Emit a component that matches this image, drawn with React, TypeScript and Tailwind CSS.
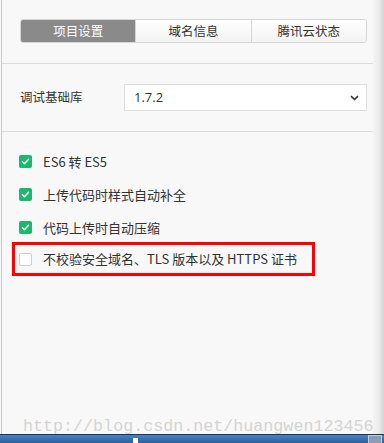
import { useState } from 'react';

const tabs = ['项目设置', '域名信息', '腾讯云状态'];

const options = [
  { label: 'ES6 转 ES5', checked: true },
  { label: '上传代码时样式自动补全', checked: true },
  { label: '代码上传时自动压缩', checked: true },
  { label: '不校验安全域名、TLS 版本以及 HTTPS 证书', checked: false, marked: true },
];

function CheckBox({ checked }: { checked: boolean }) {
  if (!checked) {
    return <span className="block w-[13px] h-[13px] rounded-[2px] border border-[#cfcfcf] bg-white shrink-0" />;
  }
  return (
    <span className="flex items-center justify-center w-[13px] h-[13px] rounded-[2px] bg-[#1ab96f] shrink-0">
      <svg width="9" height="9" viewBox="0 0 10 10" fill="none">
        <path d="M1.6 5.2l2.3 2.3L8.4 2.6" stroke="white" strokeWidth="1.7" strokeLinecap="round" strokeLinejoin="round" />
      </svg>
    </span>
  );
}

export default function App() {
  const [active, setActive] = useState(0);

  return (
    <div
      className="relative w-[384px] h-[443px] overflow-hidden bg-[#f8f8f8] text-[#333]"
      style={{ fontFamily: '"Noto Sans CJK SC", "Noto Sans", sans-serif' }}
    >
      <div className="flex h-[434px]">
        {/* settings panel */}
        <div className="w-[372px] ml-px border-l border-[#c9c9c9] flex flex-col bg-[#f8f8f8]">
          <div className="pt-[19px] px-[18px] pb-[20px] border-b border-[#dcdcdc]">
            <div className="flex h-[24px] w-[347px] rounded-[3px] border border-[#d6d6d6] overflow-hidden">
              {tabs.map((tab, i) => (
                <button
                  key={tab}
                  onClick={() => setActive(i)}
                  className={`flex-1 flex items-center justify-center text-[12.5px] leading-none ${
                    i > 0 ? 'border-l border-[#d6d6d6]' : ''
                  } ${active === i ? 'bg-[#8a8a8a] text-white' : 'bg-gradient-to-b from-white to-[#f3f3f3] text-[#333]'}`}
                >
                  {tab}
                </button>
              ))}
            </div>
          </div>

          <div className="flex items-center pl-[18px] pt-[20px] pb-[20px] border-b border-[#dcdcdc]">
            <span className="w-[104px] text-[12.5px] text-[#333]">调试基础库</span>
            <div className="flex items-center justify-between w-[243px] h-[27px] border border-[#dedede] bg-white pl-[9px] pr-[7px]">
              <span className="text-[13px] text-[#333]" style={{ fontFamily: '"Open Sans", "Noto Sans", sans-serif' }}>
                1.7.2
              </span>
              <svg width="9" height="6" viewBox="0 0 9 6" fill="none">
                <path d="M1 1.2l3.5 3.3L8 1.2" stroke="#333" strokeWidth="1.6" />
              </svg>
            </div>
          </div>

          <div className="flex flex-col pt-[13px] pl-[10px]">
            {options.map((opt) => (
              <div
                key={opt.label}
                className={`flex items-center gap-[11px] w-[303px] pl-[4px] border-[3px] ${
                  opt.marked ? 'h-[34px] -mt-[2px] border-[#ff0000]' : 'h-[33px] border-transparent'
                }`}
              >
                <CheckBox checked={opt.checked} />
                <span className="text-[13px] text-[#333] whitespace-nowrap">{opt.label}</span>
              </div>
            ))}
          </div>

          <div className="mt-auto pl-[21px] -mb-[2px]">
            <span
              className="text-[16.7px] leading-none text-[#d4d4d4]"
              style={{ fontFamily: '"Liberation Mono", monospace' }}
            >
              http://blog.csdn.net/huangwen123456
            </span>
          </div>
        </div>

        {/* window shadow */}
        <div className="flex-1 bg-gradient-to-r from-[#f4f4f4] via-[#ececec] to-[#d4d4d4]" />
      </div>

      {/* taskbar */}
      <div className="relative h-[9px] border-t border-[#17345a] bg-gradient-to-b from-[#4a82c0] to-[#2c5f9e]">
        <span className="absolute left-[133px] top-[3px] w-[5px] h-[6px] bg-white" />
        <span className="absolute right-[2px] top-0 w-[14px] h-[9px] border border-[#c0ccd8] bg-[#8c9db3]" />
      </div>
    </div>
  );
}
